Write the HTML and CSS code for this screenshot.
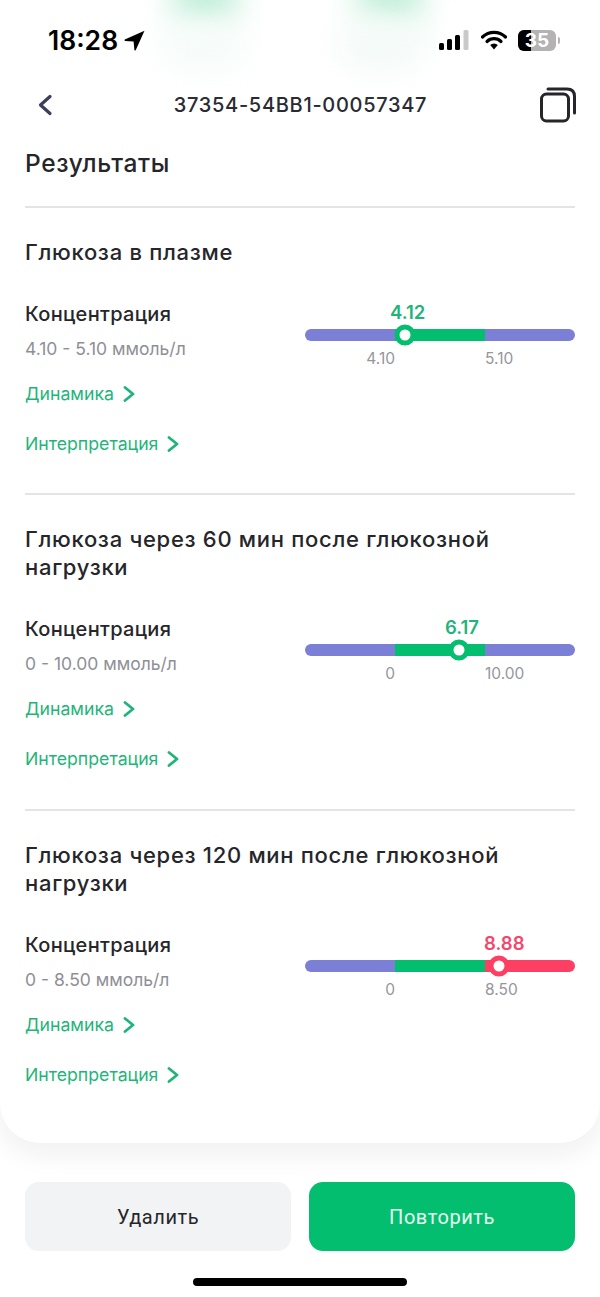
FILE: index.html
```html
<!DOCTYPE html>
<html lang="ru">
<head>
<meta charset="utf-8">
<title>Результаты</title>
<link rel="stylesheet" href="styles.css">
</head>
<body>
<div class="screen">
  <div class="glow glow-a"></div>
  <div class="glow glow-b"></div>
  <div class="glow glow-c"></div>
  <div class="glow glow-d"></div>
  <main class="card">
    <header class="status">
      <div class="status-left">
        <span class="time">18:28</span>
        <svg class="loc" viewBox="0 0 21 21"><path d="M20.5 .8 L.8 9.6 Q0 10.4 1 11 L9.6 11.4 L10.4 20 Q11 21 11.8 20 Z" fill="#000"/></svg>
      </div>
      <div class="status-right">
        <svg class="signal" viewBox="0 0 30 20"><rect x="0" y="13" width="5" height="7" rx="1.5" fill="#000"/><rect x="8" y="9" width="5" height="11" rx="1.5" fill="#000"/><rect x="16" y="5" width="5" height="15" rx="1.5" fill="#000"/><rect x="24.500" y="0" width="5" height="20" rx="1.500" fill="#c9c9c9"/></svg>
        <svg class="wifi" viewBox="0 0 26 20"><path d="M1.500 7 A16.500 16.500 0 0 1 24.500 7" fill="none" stroke="#000" stroke-width="3.200" stroke-linecap="round"/><path d="M6 11.500 A10 10 0 0 1 20 11.500" fill="none" stroke="#000" stroke-width="3.200" stroke-linecap="round"/><path d="M9.200 15 L13 19.500 L16.800 15 A5.500 5.500 0 0 0 9.200 15 Z" fill="#000"/></svg>
        <div class="battery"><span class="battery-level"></span><span class="battery-text">35</span><span class="battery-cap"></span></div>
      </div>
    </header>
    <nav class="nav">
      <svg class="back" viewBox="0 0 16 22"><path d="M13 2.500 L3.500 11 L13 19.500" fill="none" stroke="#3f3d5c" stroke-width="3.200" stroke-linecap="round" stroke-linejoin="round"/></svg>
      <h1 class="nav-title">37354-54BB1-00057347</h1>
      <svg class="copy" viewBox="0 0 36 36"><rect x="1.500" y="7" width="27" height="27" rx="5" fill="none" stroke="#26262a" stroke-width="3"/><path d="M8 2 H27 Q34.500 2 34.500 9.500 V26" fill="none" stroke="#26262a" stroke-width="3" stroke-linecap="round"/></svg>
    </nav>
    <h2 class="heading">Результаты</h2>

    <section class="result">
      <h3 class="result-title">Глюкоза в плазме</h3>
      <div class="metric">
        <div class="metric-info">
          <div class="metric-name">Концентрация</div>
          <div class="metric-range">4.10 - 5.10 ммоль/л</div>
        </div>
        <div class="scale">
          <span class="scale-value" style="left:85px">4.12</span>
          <div class="track"><i class="seg low"></i><i class="seg ok"></i><i class="seg low"></i>
            <span class="marker" style="left:99.500px"></span></div>
          <div class="ticks"><span class="tick-a">4.10</span><span class="tick-b">5.10</span></div>
        </div>
      </div>
      <a class="link link-first">Динамика <svg class="chev" viewBox="0 0 12 16"><path d="M2 1.500 L10 8 L2 14.500" fill="none" stroke="#1fb57a" stroke-width="2.800" stroke-linecap="round" stroke-linejoin="round"/></svg></a>
      <a class="link">Интерпретация <svg class="chev" viewBox="0 0 12 16"><path d="M2 1.500 L10 8 L2 14.500" fill="none" stroke="#1fb57a" stroke-width="2.800" stroke-linecap="round" stroke-linejoin="round"/></svg></a>
    </section>

    <section class="result">
      <h3 class="result-title">Глюкоза через 60 мин после глюкозной нагрузки</h3>
      <div class="metric">
        <div class="metric-info">
          <div class="metric-name">Концентрация</div>
          <div class="metric-range">0 - 10.00 ммоль/л</div>
        </div>
        <div class="scale">
          <span class="scale-value" style="left:140px">6.17</span>
          <div class="track"><i class="seg low"></i><i class="seg ok"></i><i class="seg low"></i>
            <span class="marker" style="left:154px"></span></div>
          <div class="ticks"><span class="tick-a">0</span><span class="tick-b">10.00</span></div>
        </div>
      </div>
      <a class="link link-first">Динамика <svg class="chev" viewBox="0 0 12 16"><path d="M2 1.500 L10 8 L2 14.500" fill="none" stroke="#1fb57a" stroke-width="2.800" stroke-linecap="round" stroke-linejoin="round"/></svg></a>
      <a class="link">Интерпретация <svg class="chev" viewBox="0 0 12 16"><path d="M2 1.500 L10 8 L2 14.500" fill="none" stroke="#1fb57a" stroke-width="2.800" stroke-linecap="round" stroke-linejoin="round"/></svg></a>
    </section>

    <section class="result result-last">
      <h3 class="result-title">Глюкоза через 120 мин после глюкозной нагрузки</h3>
      <div class="metric">
        <div class="metric-info">
          <div class="metric-name">Концентрация</div>
          <div class="metric-range">0 - 8.50 ммоль/л</div>
        </div>
        <div class="scale">
          <span class="scale-value high-text" style="left:179px">8.88</span>
          <div class="track"><i class="seg low"></i><i class="seg ok"></i><i class="seg high"></i>
            <span class="marker marker-high" style="left:194px"></span></div>
          <div class="ticks"><span class="tick-a">0</span><span class="tick-b">8.50</span></div>
        </div>
      </div>
      <a class="link link-first">Динамика <svg class="chev" viewBox="0 0 12 16"><path d="M2 1.500 L10 8 L2 14.500" fill="none" stroke="#1fb57a" stroke-width="2.800" stroke-linecap="round" stroke-linejoin="round"/></svg></a>
      <a class="link">Интерпретация <svg class="chev" viewBox="0 0 12 16"><path d="M2 1.500 L10 8 L2 14.500" fill="none" stroke="#1fb57a" stroke-width="2.800" stroke-linecap="round" stroke-linejoin="round"/></svg></a>
    </section>
  </main>
  <footer class="actions">
    <button class="btn btn-muted">Удалить</button>
    <button class="btn btn-primary">Повторить</button>
  </footer>
  <div class="home-bar"></div>
</div>
</body>
</html>
```
FILE: styles.css
```css
* { box-sizing: border-box; }
html, body { margin: 0; padding: 0; background: #fff; }
body { font-family: Inter, "Noto Sans", sans-serif; color: #26262a; }
.screen { position: relative; width: 600px; height: 1297px; overflow: hidden; background: #fff; display: flex; flex-direction: column; }

.glow { position: absolute; border-radius: 50%; z-index: 2; pointer-events: none; }
.glow-a { left: 172px; top: -32px; width: 66px; height: 58px; background: #bcedd6; filter: blur(16px); }
.glow-b { left: 357px; top: -32px; width: 66px; height: 58px; background: #bcedd6; filter: blur(16px); }
.glow-c { left: 158px; top: 18px; width: 90px; height: 55px; background: #f6fcf9; filter: blur(14px); }
.glow-d { left: 335px; top: 15px; width: 95px; height: 60px; background: #f5fbf8; filter: blur(14px); }

.card { position: relative; height: 1143px; background: #fff; border-radius: 0 0 40px 40px; box-shadow: 0 10px 28px rgba(30, 30, 50, .07); padding: 0 25px; flex: none; }

.status { position: relative; z-index: 3; display: flex; justify-content: space-between; align-items: center; height: 80px; margin: 0 -25px; padding: 0 44px 0 48px; }
.status-left { display: flex; align-items: center; gap: 6px; }
.time { font-size: 26.500px; font-weight: 600; color: #000; line-height: 32px; }
.loc { width: 21px; height: 21px; }
.status-right { display: flex; align-items: center; }
.signal { width: 30px; height: 20px; margin-right: 12px; }
.wifi { width: 26px; height: 20px; margin-right: 11px; }
.battery { position: relative; width: 38px; height: 21px; border-radius: 6px; background: #b3b3b3; overflow: visible; display: flex; align-items: center; justify-content: center; }
.battery-level { position: absolute; left: 0; top: 0; bottom: 0; width: 13px; background: #000; border-radius: 6px 0 0 6px; }
.battery-text { position: relative; font-size: 19px; font-weight: 700; color: #fff; line-height: 21px; }
.battery-cap { position: absolute; right: -4px; top: 7px; width: 2px; height: 7px; background: #b3b3b3; border-radius: 0 2px 2px 0; }

.nav { display: flex; align-items: center; justify-content: space-between; height: 50px; margin-right: -1px; padding-left: 12px; }
.back { width: 16px; height: 22px; }
.nav-title { margin: 0 0 0 8px; font-size: 20px; font-weight: 500; line-height: 26px; letter-spacing: .7px; color: #2a2a33; }
.copy { width: 36px; height: 36px; }

.heading { margin: 18px 0 0; height: 60px; font-size: 24.500px; font-weight: 500; line-height: 30px; letter-spacing: .6px; border-bottom: 2px solid #e4e4e6; }

.result { padding: 30px 0 38.400px; border-bottom: 2px solid #e4e4e6; }
.result-last { border-bottom: 0; }
.result-title { margin: 0; font-size: 22px; font-weight: 500; line-height: 28px; letter-spacing: .7px; color: #26262a; }

.metric { display: flex; justify-content: space-between; margin-top: 36px; }
.metric-info { display: flex; flex-direction: column; }
.metric-name { font-size: 20px; font-weight: 500; line-height: 24px; letter-spacing: .3px; color: #26262a; }
.metric-range { margin-top: 12px; font-size: 17.500px; line-height: 22px; color: #8f8f96; }

.scale { position: relative; width: 270px; padding-top: 27px; }
.scale-value { position: absolute; top: -1px; font-size: 18.500px; font-weight: 600; line-height: 22px; color: #1fb57a; }
.high-text { color: #f4476b; }
.track { position: relative; display: flex; height: 12px; border-radius: 6px; }
.seg { flex: 1; display: block; }
.seg:first-child { border-radius: 6px 0 0 6px; }
.seg:nth-child(3) { border-radius: 0 6px 6px 0; }
.low { background: #7b80d6; }
.ok { background: #04be6f; }
.high { background: #fc3f63; }
.marker { position: absolute; top: 50%; width: 21px; height: 21px; transform: translate(-50%, -50%); border-radius: 50%; background: #fff; border: 5px solid #04be6f; }
.marker-high { border-color: #fc3f63; }
.ticks { display: grid; grid-template-columns: 90px 90px 90px; margin-top: 9px; font-size: 15.500px; line-height: 18px; color: #96969c; }
.tick-a { text-align: right; }
.tick-b { grid-column: 3; }

.link { display: flex; align-items: center; gap: 9px; margin-top: 28px; font-size: 17.700px; line-height: 22px; color: #1fb57a; }
.link-first { margin-top: 15px; }
.chev { width: 12px; height: 16px; }

.actions { display: flex; gap: 18px; margin-top: 39px; padding: 0 25px; }
.btn { flex: 1; height: 69px; border: 0; border-radius: 14px; font-family: Roboto, sans-serif; font-size: 20px; letter-spacing: .55px; }
.btn-muted { background: #f2f3f5; color: #26262a; }
.btn-primary { background: #04be6f; color: #e8fbf2; }

.home-bar { width: 214px; height: 8px; margin: 27px auto 0; background: #000; border-radius: 4px; }
```
